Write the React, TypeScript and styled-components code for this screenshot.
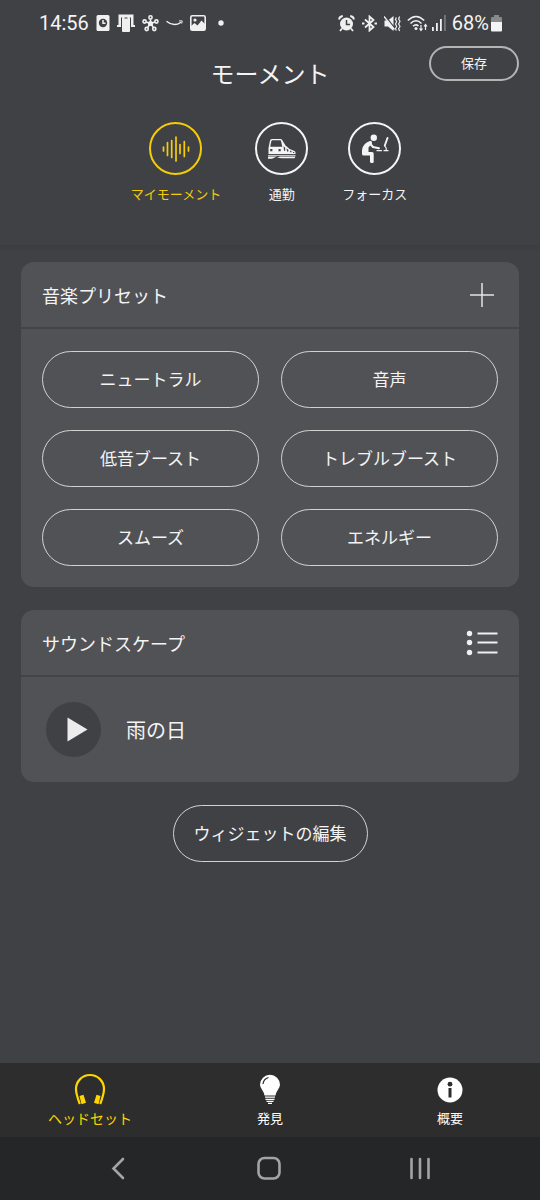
import React from "react";
import styled, { createGlobalStyle } from "styled-components";

const GlobalStyle = createGlobalStyle`
  *, *::before, *::after { box-sizing: border-box; }
  body {
    margin: 0;
    background: #404145;
    color: #f4f4f4;
    font-family: "Noto Sans CJK JP", sans-serif;
  }
  h1, h2, p { margin: 0; font-weight: 400; }
  button { font: inherit; color: inherit; background: none; border: 0; padding: 0; cursor: pointer; }
  a { color: inherit; text-decoration: none; }
  svg { display: block; flex: none; }
`;

const Screen = styled.div`
  min-height: 100vh;
  display: flex;
  flex-direction: column;
`;

const StatusBar = styled.div`
  display: flex;
  align-items: center;
  justify-content: space-between;
  height: 46px;
  padding: 0 38px 0 39px;
  font: 20px/24px Roboto, sans-serif;
`;

const StatusGroup = styled.div<{ $gap: number }>`
  display: flex;
  align-items: center;
  gap: ${(p) => p.$gap}px;
`;

const Header = styled.header`
  height: 200px;
  border-bottom: 1px solid #3c3d40;
  box-shadow: 0 2px 4px rgba(0, 0, 0, 0.08);
`;

const TitleRow = styled.div`
  display: grid;
  grid-template-columns: 1fr auto 1fr;
  align-items: start;
  padding: 0 21px;
`;

const Title = styled.h1`
  grid-column: 2;
  padding-top: 9px;
  font-size: 24px;
  line-height: 36px;
`;

const PillButton = styled.button<{ $size?: "small" | "large" }>`
  height: ${(p) => (p.$size === "small" ? 35 : 57)}px;
  padding: 0 ${(p) => (p.$size === "small" ? 30 : 20)}px 1px;
  border: ${(p) => (p.$size === "small" ? "2px solid #b4b4b2" : "1px solid #d2d2d0")};
  border-radius: 29px;
  font-size: ${(p) => (p.$size === "small" ? 13 : 17)}px;
  line-height: 24px;
`;

const SaveButton = styled(PillButton)`
  justify-self: end;
`;

const Moments = styled.nav`
  display: flex;
  justify-content: center;
  gap: 34px;
  padding: 31px 2px 0 0;
`;

const Moment = styled.button<{ $active?: boolean }>`
  display: flex;
  flex-direction: column;
  align-items: center;
  gap: 9px;
  color: ${(p) => (p.$active ? "#f5cc0a" : "#f4f4f4")};
  font-size: 13px;
  line-height: 20px;
`;

const MomentIcon = styled.span`
  display: grid;
  place-items: center;
  width: 53px;
  height: 53px;
  border: 2px solid currentColor;
  border-radius: 50%;
`;

const Content = styled.main`
  flex: 1;
  display: flex;
  flex-direction: column;
  gap: 23px;
  padding: 16px 21px;
`;

const Card = styled.section`
  border-radius: 13px;
  background: #515256;
`;

const CardHeader = styled.div`
  display: flex;
  align-items: center;
  justify-content: space-between;
  height: 67px;
  padding: 0 21px;
  border-bottom: 2px solid #434447;
`;

const CardTitle = styled.h2`
  font-size: 18px;
  line-height: 28px;
`;

const PresetGrid = styled.div`
  display: grid;
  grid-template-columns: 1fr 1fr;
  gap: 22px;
  padding: 22px 21px 21px;
`;

const Track = styled.div`
  display: flex;
  align-items: center;
  gap: 25px;
  padding: 25px;
  font-size: 20px;
  line-height: 30px;
`;

const PlayButton = styled.button`
  display: grid;
  place-items: center;
  width: 55px;
  height: 55px;
  border-radius: 50%;
  background: #404145;
`;

const EditButton = styled(PillButton)`
  align-self: center;
`;

const TabBar = styled.nav`
  display: grid;
  grid-template-columns: repeat(3, 1fr);
  height: 74px;
  background: #2d2d2d;
`;

const Tab = styled.a<{ $active?: boolean }>`
  display: flex;
  flex-direction: column;
  align-items: center;
  padding-top: 9px;
  color: ${(p) => (p.$active ? "#ffd500" : "#ffffff")};
  font-size: ${(p) => (p.$active ? 14 : 13)}px;
  line-height: 20px;
  gap: 2px;
`;

const SystemNav = styled.div`
  display: flex;
  align-items: center;
  justify-content: center;
  gap: 119px;
  height: 63px;
  padding: 0 2px 1px 0;
  background: #252628;
`;

const ClockCardIcon = () => (
  <svg width="14" height="16" viewBox="0 0 14 16">
    <rect x="0.5" width="13" height="16" rx="1.5" fill="#f0f0f0" />
    <circle cx="7" cy="8" r="4.2" fill="#404145" />
    <path d="M7 5v3.2h2.5" stroke="#f0f0f0" strokeWidth="1.5" fill="none" />
  </svg>
);

const DeviceIcon = () => (
  <svg width="18" height="18" viewBox="0 0 18 18">
    <path d="M1.500 0.500h15v10.500H18v2h-4V3.500H4V13H0v-2h1.500z" fill="#f0f0f0" />
    <rect x="5" y="3" width="8" height="15" rx="1" fill="#f0f0f0" />
    <path d="M7.500 4h3" stroke="#404145" />
  </svg>
);

const HubIcon = () => (
  <svg width="17" height="17" viewBox="0 0 17 17" fill="none" stroke="#f0f0f0" strokeWidth="1.6">
    <path d="M8.5 8.5V4M8.5 8.5l4.4-1.4M8.5 8.5l2.8 3.8M8.5 8.5l-2.8 3.8M8.5 8.5L4.1 7.1" />
    <circle cx="8.5" cy="2.4" r="1.6" />
    <circle cx="14.4" cy="6.5" r="1.6" />
    <circle cx="12.3" cy="14" r="1.6" />
    <circle cx="4.7" cy="14" r="1.6" />
    <circle cx="2.6" cy="6.5" r="1.6" />
    <circle cx="8.5" cy="8.5" r="1.8" fill="#f0f0f0" />
  </svg>
);

const SmileIcon = () => (
  <svg width="17" height="6" viewBox="0 0 17 6" fill="none" stroke="#f0f0f0">
    <path d="M0.5 1.2C5 5 10.5 5.5 15 2.2" strokeWidth="1.4" />
    <path d="M13 0.9h3.2L15.7 3.6" strokeWidth="1" />
  </svg>
);

const PhotoIcon = () => (
  <svg width="16" height="16" viewBox="0 0 16 16">
    <rect x="0.8" y="0.8" width="14.4" height="14.4" rx="1.5" fill="none" stroke="#f0f0f0" strokeWidth="1.6" />
    <circle cx="5" cy="5" r="1.6" fill="#f0f0f0" />
    <path d="M1 11l3.5-3 3 2.5L11.5 5.5 15 9v6H1z" fill="#f0f0f0" />
  </svg>
);

const AlarmIcon = () => (
  <svg width="17" height="17" viewBox="0 0 17 17" fill="none" stroke="#f0f0f0">
    <circle cx="8.5" cy="9" r="6.5" fill="#f0f0f0" stroke="none" />
    <path d="M1 4.5Q1.5 1.5 4.8 1M16 4.5Q15.5 1.5 12.2 1M4 13.5l-2 2.5M13 13.5l2 2.5" strokeWidth="1.8" />
    <path d="M8.5 5v4.500H12" stroke="#404145" strokeWidth="1.5" />
  </svg>
);

const BluetoothIcon = () => (
  <svg width="15" height="17" viewBox="0 0 15 17" fill="none" stroke="#f0f0f0" strokeWidth="1.8">
    <path d="M3 4.5l8.500 7.500-4 3.500V1.500l4 3.500L3 12.500" />
    <path d="M0 8.500h2.500M12.500 8.500H15" />
  </svg>
);

const MuteIcon = () => (
  <svg width="17" height="17" viewBox="0 0 17 17" fill="none" stroke="#f0f0f0">
    <path d="M0.500 5.500H4L9.500 1v15L4 11.500H0.500z" fill="#f0f0f0" stroke="none" />
    <path d="M1 1l10 12.500" stroke="#404145" strokeWidth="1.500" />
    <path d="M0 1.500l10.500 13" strokeWidth="1.300" />
    <path d="M12.300 2.500l-.8 2 1.200 2-1.200 2.500 1.200 2.500-1.200 2 .8 2M15.600 1.500l-1 2.500 1.400 2.300-1.400 2.700 1.400 2.500-1.400 2.300 1 2.200" strokeWidth="1.200" />
  </svg>
);

const WifiIcon = () => (
  <svg width="21" height="17" viewBox="0 0 21 17" fill="none" stroke="#f0f0f0" strokeWidth="1.6">
    <path d="M0.8 5.5Q9 -2.500 17.200 5.500M3.500 8.500Q9 3 14.500 8.500M6 11.200Q9 8.500 11.500 11" />
    <circle cx="9" cy="13.500" r="1.500" fill="#f0f0f0" stroke="none" />
    <path d="M14 10v5M12.500 13.500l1.500 2 1.500-2M18.500 15v-5M17 11.500l1.500-2 1.500 2" strokeWidth="1.200" />
  </svg>
);

const SignalIcon = () => (
  <svg width="14" height="16" viewBox="0 0 14 16" fill="#f0f0f0">
    <rect y="12" width="1.8" height="4" />
    <rect x="4" y="8" width="1.8" height="8" />
    <rect x="8" y="4" width="1.8" height="12" />
    <rect x="12" y="0" width="1.8" height="16" fill="#77787b" />
  </svg>
);

const BatteryIcon = () => (
  <svg width="11" height="17" viewBox="0 0 11 17">
    <path d="M3 0h5v2h2q1 0 1 1v4H0V3q0-1 1-1h2z" fill="#88898b" />
    <path d="M0 7h11v8.500q0 1-1 1H1q-1 0-1-1z" fill="#f4f4f4" />
  </svg>
);

const WaveIcon = () => (
  <svg width="28" height="28" viewBox="0 0 28 28" stroke="currentColor" strokeWidth="1.7" strokeLinecap="round">
    <path d="M1.500 12v4M5.500 7.500v13M9.700 5.500v17M14 2v24M18 9.500v9M22.300 6.500v15M26.500 12v4" />
  </svg>
);

const TrainIcon = () => (
  <svg width="28" height="20" viewBox="0 0 28 20">
    <path d="M0.500 15V9L2 1.500Q2.200 0 4 0H12.500Q14 0 14.500 1.500L17.500 6.500Q21 10.500 27 12.300Q27.800 13.500 27.500 15z" fill="currentColor" />
    <path d="M2.200 7.800L3.400 2Q3.600 1.200 4.500 1.200H12Q12.800 1.200 13 2L14.300 7.800z" fill="#404145" />
    <path d="M2.200 10h2.200v2.200H2.200zM10.500 10h2.200v2.200h-2.200zM15.600 7.300l1.600 1.400v3h-1.200zM18.600 9.600l1.800 1.200v1.700h-1.400zM22 11.500l1.600.8v1h-1.400zM25 12.800l1.300.5v.6H25z" fill="#404145" />
    <path d="M0 15.900h27.500v1H0z" fill="currentColor" opacity="0.8" />
    <path d="M0 17.400h9L4 19.700H0zM12 17.400h15.500L26.500 19.200H13.500L9 18.500z" fill="currentColor" />
  </svg>
);

const FocusIcon = () => (
  <svg width="28" height="30" viewBox="0 0 28 30" fill="none" stroke="currentColor" strokeLinecap="round" strokeLinejoin="round">
    <circle cx="12.800" cy="3.800" r="3.200" fill="currentColor" stroke="none" />
    <path d="M9.500 6.800Q2 9 1 16V20Q1 21.500 2.500 21.500H9V28Q9.200 29 10.500 29H11.500Q12.700 29 12.700 28V19.500Q12.700 18 11 18H7.500V13.500L11 9.500Q11.500 7.500 9.500 6.800z" fill="currentColor" stroke="none" />
    <path d="M9 9.500L12 13 18 14.200" strokeWidth="2" />
    <path d="M26.500 4L23.800 11.500" strokeWidth="1.900" />
    <path d="M16 16.700h4.500M23 16.700h4M23.800 12l1.400 2v2.200" strokeWidth="1.200" />
  </svg>
);

const PlusIcon = () => (
  <svg width="32" height="24" viewBox="0 0 32 24" stroke="#e4e4e4" strokeWidth="1.5">
    <path d="M4 12h24M16 0v24" />
  </svg>
);

const ListIcon = () => (
  <svg width="32" height="26" viewBox="0 0 32 26" fill="#f0f0f0">
    <circle cx="3.5" cy="3.5" r="2.7" />
    <circle cx="3.5" cy="12.5" r="2.7" />
    <circle cx="3.5" cy="22.5" r="2.7" />
    <path d="M11.500 2.500h20v2h-20zM11.500 11.500h20v2h-20zM11.500 21.500h20v2h-20z" />
  </svg>
);

const PlayIcon = () => (
  <svg width="55" height="55" viewBox="0 0 55 55">
    <path d="M21.500 15.500v24L41.500 27.500z" fill="#ececec" />
  </svg>
);

const HeadsetIcon = () => (
  <svg width="32" height="34" viewBox="0 0 32 34" fill="none" stroke="currentColor">
    <path d="M5.800 32Q2 22 2 17a14 14 0 0 1 28 0Q30 22 26.200 32" strokeWidth="2.2" />
    <path d="M5.500 24l4-1.200 2.500 8-4.500 1.400zM26.500 24l-4-1.200-2.500 8 4.500 1.400z" fill="currentColor" stroke="none" />
  </svg>
);

const BulbIcon = () => (
  <svg width="22" height="34" viewBox="0 0 22 34" fill="none" stroke="currentColor">
    <path d="M5.500 23.500Q5 20.500 3.200 18Q1 15 1 12.800a10 10 0 0 1 20 0Q21 15 18.800 18Q17 20.500 16.500 23.500z" fill="currentColor" stroke="none" />
    <path d="M4 12Q4.500 7 9.500 5.500" stroke="#2d2d2d" strokeWidth="1.2" />
    <path d="M6 25.200h10M6.500 27.300h9M7.500 29.400h7M9 31.300h4" strokeWidth="1.3" />
  </svg>
);

const InfoIcon = () => (
  <svg width="26" height="34" viewBox="0 0 26 34">
    <circle cx="13" cy="18" r="12.5" fill="currentColor" />
    <circle cx="13" cy="12.200" r="2.400" fill="#2d2d2d" />
    <path d="M11.500 16h3v9.500h-3z" fill="#2d2d2d" />
  </svg>
);

const NavIcon = ({ children }: { children: React.ReactNode }) => (
  <svg width="32" height="32" viewBox="0 0 32 32" fill="none" stroke="#a4a4a4" strokeWidth="2.6" strokeLinecap="round">
    {children}
  </svg>
);

const presets = ["ニュートラル", "音声", "低音ブースト", "トレブルブースト", "スムーズ", "エネルギー"];

export default function App() {
  return (
    <Screen>
      <GlobalStyle />
      <StatusBar>
        <StatusGroup $gap={7}>
          <span>14:56</span>
          <ClockCardIcon />
          <DeviceIcon />
          <HubIcon />
          <SmileIcon />
          <PhotoIcon />
          <svg width="22" height="6" viewBox="0 0 22 6">
            <circle cx="8" cy="3" r="2.7" fill="#f0f0f0" />
          </svg>
        </StatusGroup>
        <StatusGroup $gap={6}>
          <StatusGroup $gap={7}>
            <AlarmIcon />
            <BluetoothIcon />
            <MuteIcon />
          </StatusGroup>
          <StatusGroup $gap={4}>
            <WifiIcon />
            <SignalIcon />
          </StatusGroup>
          <StatusGroup $gap={2}>
            <span>68%</span>
            <BatteryIcon />
          </StatusGroup>
        </StatusGroup>
      </StatusBar>
      <Header>
        <TitleRow>
          <Title>モーメント</Title>
          <SaveButton $size="small">保存</SaveButton>
        </TitleRow>
        <Moments>
          <Moment $active>
            <MomentIcon><WaveIcon /></MomentIcon>
            マイモーメント
          </Moment>
          <Moment>
            <MomentIcon><TrainIcon /></MomentIcon>
            通勤
          </Moment>
          <Moment>
            <MomentIcon><FocusIcon /></MomentIcon>
            フォーカス
          </Moment>
        </Moments>
      </Header>
      <Content>
        <Card>
          <CardHeader>
            <CardTitle>音楽プリセット</CardTitle>
            <button aria-label="追加"><PlusIcon /></button>
          </CardHeader>
          <PresetGrid>
            {presets.map((name) => (
              <PillButton key={name}>{name}</PillButton>
            ))}
          </PresetGrid>
        </Card>
        <Card>
          <CardHeader>
            <CardTitle>サウンドスケープ</CardTitle>
            <button aria-label="一覧"><ListIcon /></button>
          </CardHeader>
          <Track>
            <PlayButton aria-label="再生"><PlayIcon /></PlayButton>
            <p>雨の日</p>
          </Track>
        </Card>
        <EditButton>ウィジェットの編集</EditButton>
      </Content>
      <TabBar>
        <Tab href="#headset" $active><HeadsetIcon />ヘッドセット</Tab>
        <Tab href="#discover"><BulbIcon />発見</Tab>
        <Tab href="#about"><InfoIcon />概要</Tab>
      </TabBar>
      <SystemNav>
        <button aria-label="戻る">
          <NavIcon><path d="M21 7L11.5 16.5 21 26" /></NavIcon>
        </button>
        <button aria-label="ホーム">
          <NavIcon><rect x="5.5" y="6" width="21" height="20.5" rx="6" /></NavIcon>
        </button>
        <button aria-label="履歴">
          <NavIcon><path d="M7.5 7v19M16 7v19M24.5 7v19" /></NavIcon>
        </button>
      </SystemNav>
    </Screen>
  );
}
